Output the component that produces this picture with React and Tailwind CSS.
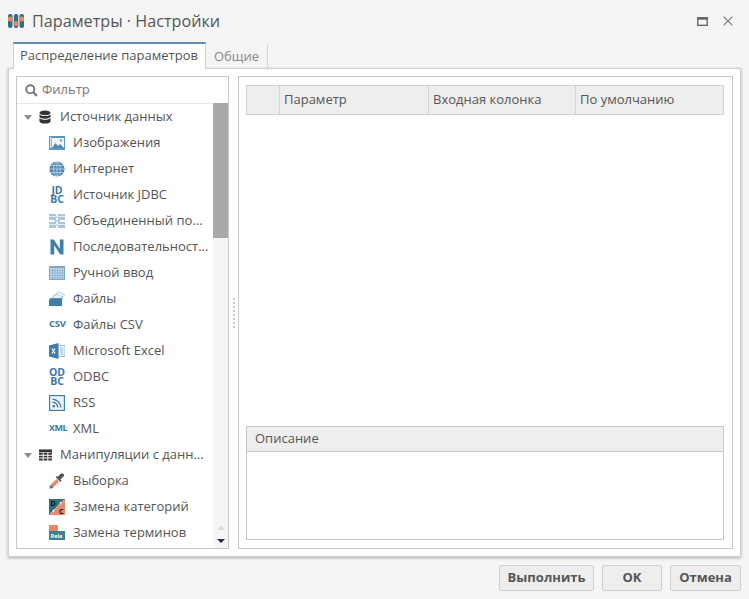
import React from "react";

const TextIcon = ({ t, cls }) => (
  <span className={`w-4 text-center whitespace-pre-line font-bold text-[#3a78a8] ${cls}`}>{t}</span>
);

const F = "'Open Sans',sans-serif";
const icons = {
  image: (
    <svg width="16" height="16" viewBox="0 0 16 16"><rect x="0" y="1" width="16" height="14" fill="#5f94bc"/><rect x="3" y="3" width="12" height="10" fill="#f2f7fb"/><rect x="1" y="2" width="1.500" height="11" fill="#d8e6f0"/><path d="M3 13l3.500-5 2.500 3 2-2 4 4z" fill="#4f88b3"/><circle cx="12" cy="5.500" r="1.200" fill="#6f9fc4"/></svg>
  ),
  globe: (
    <svg width="16" height="16" viewBox="0 0 16 16"><circle cx="8" cy="8" r="7.600" fill="#4f88b3"/><g stroke="#cfe0ec" strokeWidth=".7" fill="none"><ellipse cx="8" cy="8" rx="3.400" ry="7.400"/><path d="M8 .5v15M.5 8h15M1.600 4.500h12.800M1.600 11.500h12.800"/></g></svg>
  ),
  join: (
    <svg width="16" height="16" viewBox="0 0 16 16"><g fill="#a9c6dc"><rect x="0" y="1" width="7" height="6"/><rect x="9" y="1" width="7" height="6"/><rect x="0" y="9" width="7" height="6"/><rect x="9" y="9" width="7" height="6"/></g><path d="M0 3.500h7M9 3.500h7M0 11.500h7M9 11.500h7" stroke="#e6f0f6" strokeWidth=".9"/><path d="M7 4h2M7 12h2M5 7l6 2M11 7l-6 2" stroke="#a9c6dc" strokeWidth="1"/></svg>
  ),
  n: (
    <svg width="16" height="16" viewBox="0 0 16 16"><path d="M1.500 15.500V.5h3.300l6 9.200V.5h3.700v15h-3.300l-6-9.200v9.200z" fill="#3f7dab"/></svg>
  ),
  grid: (
    <svg width="16" height="16" viewBox="0 0 16 16"><rect x="0" y="1" width="16" height="14" fill="#7ea9c9"/><rect x="1" y="3" width="14" height="11" fill="#c9dcea"/><path d="M3.500 3v11M6 3v11M8.500 3v11M11 3v11M13.500 3v11M1 5.500h14M1 8h14M1 10.500h14M1 13h14" stroke="#7ea9c9" strokeWidth=".7"/></svg>
  ),
  files: (
    <svg width="16" height="16" viewBox="0 0 16 16"><path d="M4 5L10 .8l5.500 3-3 4z" fill="#fff" stroke="#9dbdd5" strokeWidth=".8"/><path d="M2.500 7l5.500-4 5.500 2.500-2 3z" fill="#e6f0f6" stroke="#9dbdd5" strokeWidth=".7"/><path d="M0 9l1-1.800h12.500l-.5 1.800v6H0z" fill="#3f7dab"/></svg>
  ),
  excel: (
    <svg width="16" height="16" viewBox="0 0 16 16"><path d="M0 2.500L9.500 0v16L0 13.500z" fill="#3f7dab"/><rect x="9.500" y="2.500" width="6.500" height="11" fill="#fff" stroke="#7ea9c9" strokeWidth=".8"/><path d="M11 5h3.500M11 7h3.500M11 9h3.500M11 11h3.500" stroke="#7ea9c9" strokeWidth=".9"/><path d="M3 5.500l3 5M6 5.500l-3 5" stroke="#fff" strokeWidth="1.100"/></svg>
  ),
  rss: (
    <svg width="16" height="16" viewBox="0 0 16 16"><rect x=".6" y=".6" width="14.800" height="14.800" fill="#eef4f8" stroke="#3f7dab" strokeWidth="1.200"/><circle cx="4.800" cy="11.200" r="1.300" fill="#3f7dab"/><path d="M3.500 7.200a5.300 5.300 0 0 1 5.300 5.300M3.500 4.200a8.300 8.300 0 0 1 8.300 8.300" fill="none" stroke="#3f7dab" strokeWidth="1.400"/></svg>
  ),
  pick: (
    <svg width="16" height="16" viewBox="0 0 16 16"><path d="M.5 15.500l1-3.500 6-6 2.500 2.500-6 6z" fill="#e9866b"/><path d="M.5 15.500l1-3.500 3 3z" fill="#3d7d8a"/><path d="M7 4.500l4.500 4.500 1-1-1-1.500 3-3c1-1 .5-2-.2-2.700s-1.800-.8-2.600 0l-3 3-1-1z" fill="#555"/></svg>
  ),
  cat: (
    <svg width="16" height="16" viewBox="0 0 16 16"><rect width="16" height="16" fill="#e9866b"/><path d="M0 0h16L0 16z" fill="#2f6f7e"/><path d="M15 1L1 15M3 12h3M4.500 10.500v3M10 4h3M11.500 2.500v3" stroke="#fff" strokeWidth=".6"/><text x="1.500" y="6.500" fontSize="7" fontWeight="700" fill="#111" fontFamily={F}>D</text><text x="10" y="15" fontSize="7" fontWeight="700" fill="#111" fontFamily={F}>C</text></svg>
  ),
  term: (
    <svg width="16" height="16" viewBox="0 0 16 16"><rect x="0" y="0" width="9" height="6" fill="#e9866b"/><rect x="0" y="6" width="16" height="9" fill="#3f7f90"/><text x="1.500" y="13" fontSize="5.500" fontWeight="700" fill="#fff" fontFamily={F}>Rela</text></svg>
  ),
};

const db = (
  <svg width="12" height="14" viewBox="0 0 13 14" fill="#333"><ellipse cx="6.500" cy="2.500" rx="6" ry="2.500"/><path d="M.5 4c1 1.500 3.500 2 6 2s5-.5 6-2v2.500c0 1.400-2.700 2.300-6 2.300s-6-.9-6-2.300z"/><path d="M.5 8.200c1 1.400 3.500 1.900 6 1.900s5-.5 6-1.900v3.300c0 1.400-2.700 2.500-6 2.500s-6-1.100-6-2.500z"/></svg>
);
const table = (
  <svg width="13" height="12" viewBox="0 0 14 12" fill="#333"><path d="M0 0h14v3H0z"/><path d="M0 3.700h4v2H0zM5 3.700h4v2H5zM10 3.700h4v2h-4zM0 6.700h4v2H0zM5 6.700h4v2H5zM10 6.700h4v2h-4zM0 9.700h4V12H0zM5 9.700h4V12H5zM10 9.700h4V12h-4z"/></svg>
);

const Group = ({ icon, label }) => (
  <div className="h-[26px] flex items-center pl-[7px]">
    <span className="w-0 h-0 border-x-[4px] border-x-transparent border-t-[5px] border-t-[#8c8c8c]" />
    <span className="w-[14px] ml-[6px] flex justify-center">{icon}</span>
    <span className="ml-[8px] truncate w-[146px]">{label}</span>
  </div>
);
const Item = ({ icon, label }) => (
  <div className="h-[26px] flex items-center pl-[32px]">
    <span className="w-4 h-4 flex items-center justify-center shrink-0">{icon}</span>
    <span className="ml-[8px] truncate w-[136px]">{label}</span>
  </div>
);

export default function App() {
  return (
    <div className="w-[749px] h-[599px] bg-[#f5f5f5] flex flex-col overflow-hidden text-[13px] text-[#555] font-['Open_Sans',sans-serif]">
      <header className="h-[42px] flex items-center pl-[8px] pr-[16px]">
        <svg width="16" height="16" viewBox="0 0 16 16" className="shrink-0">
          <rect x="0" y="1" width="4.500" height="14" rx="2" fill="#2f6f7e" />
          <rect x="5.800" y="1" width="4.500" height="14" rx="2" fill="#2f6f7e" />
          <rect x="11.500" y="1" width="4.500" height="14" rx="2" fill="#2f6f7e" />
          <circle cx="2.200" cy="6" r="2.500" fill="#e9866b" />
          <circle cx="8" cy="10.500" r="2.500" fill="#e9866b" />
          <circle cx="13.800" cy="6" r="2.500" fill="#e9866b" />
        </svg>
        <h1 className="ml-[8px] text-[16.2px] text-[#555] font-normal">Параметры · Настройки</h1>
        <svg className="ml-auto" width="11" height="9" viewBox="0 0 12 10"><rect x=".75" y=".75" width="10.500" height="8.500" fill="none" stroke="#666" strokeWidth="1.500"/><rect x="0" y="0" width="12" height="3" fill="#666"/></svg>
        <svg className="ml-[15px]" width="10" height="10" viewBox="0 0 11 11"><path d="M.7.7l9.600 9.600M10.300.7L.7 10.300" stroke="#777" strokeWidth="1.200"/></svg>
      </header>

      <div className="h-[26px] flex pl-[13px] relative z-10">
        <div className="w-[193px] h-[27px] bg-white border-t-2 border-t-[#5b8db5] border-x border-x-[#cfcfcf] pb-[1px] pr-[1px] flex items-center justify-center text-[13px] text-[#555]">Распределение параметров</div>
        <div className="w-[62px] h-[26px] mt-[2px] -mb-[2px] border-r border-[#d5d5d5] flex items-center justify-center text-[13px] text-[#888]">Общие</div>
      </div>

      <main className="mx-[8px] w-[733px] h-[489px] bg-white border border-[#d0d0d0] shadow-[0_1px_3px_rgba(0,0,0,0.3)] flex pl-[7px] pt-[7px]">
        <aside className="w-[213px] h-[473px] border border-[#c8c8c8] flex flex-col shrink-0">
          <div className="h-[26px] flex items-center pl-[8px] shrink-0">
            <svg width="13" height="13" viewBox="0 0 13 13"><circle cx="5.300" cy="5.300" r="4.100" fill="none" stroke="#777" strokeWidth="1.900"/><path d="M8.300 8.300l3.700 3.700" stroke="#777" strokeWidth="2.200"/></svg>
            <span className="ml-[4px] text-[#777]">Фильтр</span>
          </div>
          <div className="flex flex-1 min-h-0 border-t border-[#e8e8e8]">
            <div className="w-[196px] overflow-hidden">
              <Group icon={db} label="Источник данных" />
              <Item icon={icons.image} label="Изображения" />
              <Item icon={icons.globe} label="Интернет" />
              <Item icon={<TextIcon t={"JD\nBC"} cls="text-[10.5px] leading-[9px]" />} label="Источник JDBC" />
              <Item icon={icons.join} label="Объединенный по..." />
              <Item icon={icons.n} label="Последовательност..." />
              <Item icon={icons.grid} label="Ручной ввод" />
              <Item icon={icons.files} label="Файлы" />
              <Item icon={<TextIcon t="CSV" cls="text-[9.5px] leading-[10px] tracking-[-0.3px] -mt-[3px]" />} label="Файлы CSV" />
              <Item icon={icons.excel} label="Microsoft Excel" />
              <Item icon={<TextIcon t={"OD\nBC"} cls="text-[10.5px] leading-[9px]" />} label="ODBC" />
              <Item icon={icons.rss} label="RSS" />
              <Item icon={<TextIcon t="XML" cls="text-[9px] leading-[10px] tracking-[-0.5px] -mt-[3px]" />} label="XML" />
              <Group icon={table} label="Манипуляции с данн..." />
              <Item icon={icons.pick} label="Выборка" />
              <Item icon={icons.cat} label="Замена категорий" />
              <Item icon={icons.term} label="Замена терминов" />
            </div>
            <div className="w-[15px] -mt-px bg-[#f5f5f5] flex flex-col shrink-0">
              <div className="h-[135px] bg-[#a9a9ac]" />
              <div className="mt-auto flex flex-col items-center pb-[5px] gap-[9px]">
                <span className="w-0 h-0 border-x-[4px] border-x-transparent border-b-[4px] border-b-[#d8d8d8]" />
                <span className="w-0 h-0 border-x-[4px] border-x-transparent border-t-[4px] border-t-[#1f2a3a]" />
              </div>
            </div>
          </div>
        </aside>

        <div className="w-[9px] h-[473px] flex flex-col items-center justify-center gap-[2px] shrink-0">
          {[0, 1, 2, 3, 4, 5, 6, 7].map((i) => <span key={i} className="w-[2px] h-[2px] bg-[#c8c8c8]" />)}
        </div>

        <section className="w-[495px] h-[473px] border border-[#c8c8c8] pl-[7px] pr-[8px] pt-[8px] pb-[8px] flex flex-col shrink-0">
          <div className="h-[30px] flex bg-[#eeeeee] border border-[#d0d0d0] shrink-0 text-[#555]">
            <div className="w-[33px] border-r border-[#d5d5d5]" />
            <div className="w-[149px] border-r border-[#d5d5d5] pl-[4px] flex items-center">Параметр</div>
            <div className="w-[147px] border-r border-[#d5d5d5] pl-[4px] flex items-center">Входная колонка</div>
            <div className="flex-1 pl-[4px] flex items-center">По умолчанию</div>
          </div>
          <div className="flex-1" />
          <div className="h-[114px] border border-[#c8c8c8] flex flex-col shrink-0">
            <div className="h-[25px] bg-[#eeeeee] border-b border-[#c8c8c8] pl-[8px] flex items-center shrink-0">Описание</div>
          </div>
        </section>
      </main>

      <footer className="flex justify-end gap-[8px] pt-[8px] pr-[8px]">
        <button className="w-[95px] h-[26px] bg-[#eeeeee] border border-[#cfcfcf] rounded-[2px] font-bold text-[13px] text-[#555]">Выполнить</button>
        <button className="w-[60px] h-[26px] bg-[#eeeeee] border border-[#cfcfcf] rounded-[2px] font-bold text-[13px] text-[#555]">OK</button>
        <button className="w-[71px] h-[26px] bg-[#eeeeee] border border-[#cfcfcf] rounded-[2px] font-bold text-[13px] text-[#555]">Отмена</button>
      </footer>
    </div>
  );
}
